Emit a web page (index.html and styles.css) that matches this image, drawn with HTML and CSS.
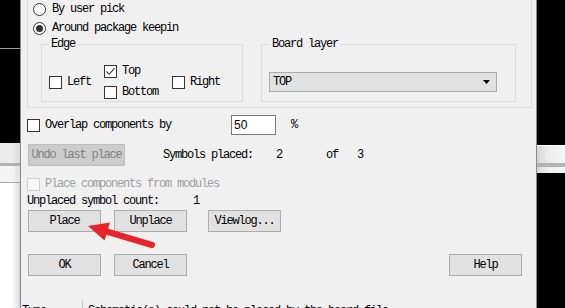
FILE: index.html
```html
<!DOCTYPE html>
<html>
<head>
<meta charset="utf-8">
<link rel="stylesheet" href="styles.css">
</head>
<body>
<div class="screen">
  <div class="bg-left">
    <div class="bl-black bl-top"></div>
    <div class="bl-line"></div>
    <div class="bl-black bl-mid"></div>
    <div class="bl-bar"></div>
    <div class="bl-dark"></div>
    <div class="bl-light"></div>
    <div class="bl-line2"></div>
    <div class="bl-white"></div>
  </div>

  <div class="dialog">
    <div class="outer">
      <div class="radio-row"><span class="radio"></span><span>By user pick</span></div>
      <div class="radio-row"><span class="radio on"></span><span>Around package keepin</span></div>
      <div class="groups">
        <div class="group group-edge">
          <div class="gtitle">Edge</div>
          <div class="edge-body">
            <div class="check col1"><span class="box"></span><span>Left</span></div>
            <div class="col2">
              <div class="check"><span class="box checked"><svg viewBox="0 0 11 11" width="11" height="11"><path d="M1.5 5.5 L4.2 8.3 L9.5 2.2" fill="none" stroke="#333" stroke-width="1.1"/></svg></span><span>Top</span></div>
              <div class="check"><span class="box"></span><span>Bottom</span></div>
            </div>
            <div class="check"><span class="box"></span><span>Right</span></div>
          </div>
        </div>
        <div class="group group-board">
          <div class="gtitle gtitle-board">Board layer</div>
          <div class="select">
            <span>TOP</span>
            <svg class="caret" viewBox="0 0 7 4" width="7" height="4"><polygon points="0,0 7,0 3.5,4" fill="#000"/></svg>
          </div>
        </div>
      </div>
    </div>

    <div class="overlap-row">
      <div class="check ov-label"><span class="box"></span><span>Overlap components by</span></div>
      <div class="input">50</div>
      <span class="pct">%</span>
    </div>

    <div class="undo-row">
      <div class="btn btn-disabled btn-undo">Undo last place</div>
      <span class="sp-label">Symbols placed:</span>
      <span class="sp-num">2</span>
      <span class="sp-of">of</span>
      <span>3</span>
    </div>

    <div class="check disabled modules-row"><span class="box"></span><span>Place components from modules</span></div>

    <div class="unplaced-row"><span class="up-label">Unplaced symbol count:</span><span>1</span></div>

    <div class="btn-row btn-row1">
      <div class="btn">Place</div>
      <div class="btn">Unplace</div>
      <div class="btn btn-viewlog">Viewlog...</div>
    </div>

    <div class="btn-row btn-row2">
      <div class="btn">OK</div>
      <div class="btn">Cancel</div>
      <div class="btn btn-help">Help</div>
    </div>

    <div class="log-row">
      <div class="log-cell log-first">Type</div>
      <div class="log-cell log-second">Schematic(s) could not be placed by the board file.</div>
    </div>

    <svg class="arrow" viewBox="0 0 515 308" width="515" height="308">
      <line x1="131" y1="245" x2="84" y2="231" stroke="#e8232a" stroke-width="6" stroke-linecap="round"/>
      <polygon points="67,226 89,222.6 83.6,240.6" fill="#e8232a"/>
    </svg>
  </div>

  <div class="bg-right">
    <div class="br-black br-top"></div>
    <div class="br-white"></div>
    <div class="br-light"></div>
    <div class="br-gray"></div>
    <div class="br-light2"></div>
    <div class="br-black br-bottom"></div>
  </div>
</div>
</body>
</html>
```

FILE: styles.css
```css
* { box-sizing: border-box; }

html, body {
  margin: 0;
  padding: 0;
}

body {
  width: 565px;
  height: 308px;
  overflow: hidden;
  font-family: "Liberation Mono", "DejaVu Sans Mono", monospace;
  font-size: 12px;
  letter-spacing: -1.2px;
  line-height: 13px;
  color: #000;
}

.screen {
  display: flex;
  width: 565px;
  height: 308px;
  overflow: hidden;
}

/* background window on the left */
.bg-left {
  width: 20px;
  display: flex;
  flex-direction: column;
}
.bl-black { background: #000; }
.bl-top { height: 48px; }
.bl-line { height: 1px; background: #9a9a9a; }
.bl-mid { height: 94px; }
.bl-bar { height: 20px; background: linear-gradient(90deg, #e9e9e9, #ececec 60%, #d8d8d8); }
.bl-dark { height: 3px; background: #b2b2b2; }
.bl-light { height: 16px; background: linear-gradient(90deg, #f4f4f4, #f4f4f4 60%, #dedede); }
.bl-line2 { height: 1px; background: #a6a6a6; }
.bl-white { flex: 1; background: linear-gradient(90deg, #ffffff, #ffffff 55%, #e6e6e6 90%, #cfcfcf); }

/* background window on the right */
.bg-right {
  width: 28px;
  display: flex;
  flex-direction: column;
}
.br-black { background: #000; }
.br-top { height: 145px; }
.br-white { height: 1px; background: #ffffff; }
.br-light { height: 17px; background: linear-gradient(90deg, #d4d4d4, #ececec 40%, #f6f6f6); }
.br-gray { height: 4px; background: #b4b4b4; }
.br-light2 { height: 6px; background: linear-gradient(90deg, #d8d8d8, #efefef 40%, #f6f6f6); }
.br-bottom { flex: 1; }

/* dialog */
.dialog {
  position: relative;
  width: 517px;
  background: #f0f0f0;
  border-left: 1px solid #7d8ba3;
  border-right: 1px solid #7d8ba3;
  padding-left: 6px;
}

.outer {
  width: 505px;
  border: 1px solid #dcdcdc;
  border-top: none;
  padding: 0 0 5px 5px;
}

.radio-row {
  display: flex;
  align-items: center;
  height: 19px;
  gap: 6px;
}

.radio {
  width: 13px;
  height: 13px;
  border: 1px solid #333;
  border-radius: 50%;
  background: #fff;
  display: flex;
  align-items: center;
  justify-content: center;
}
.radio.on::after {
  content: "";
  width: 7px;
  height: 7px;
  border-radius: 50%;
  background: #333;
}

.groups {
  display: flex;
  gap: 18px;
  margin: 6px 0 0 8px;
}

.group {
  border: 1px solid #dcdcdc;
}
.group-edge { width: 202px; padding-bottom: 2px; }
.group-board { width: 255px; }

.gtitle {
  width: max-content;
  margin: -7px 0 0 7px;
  padding: 0 2px;
  height: 12px;
  line-height: 12px;
  background: #f0f0f0;
}
.gtitle-board { margin-left: 8px; }

.edge-body {
  display: flex;
  align-items: center;
  margin-top: 15px;
  padding-left: 7px;
}
.col1 { margin-right: 13px; }
.col2 {
  display: flex;
  flex-direction: column;
  gap: 8px;
  margin-right: 14px;
}

.check {
  display: flex;
  align-items: center;
  gap: 5px;
  height: 13px;
}
.box {
  width: 13px;
  height: 13px;
  border: 1px solid #333;
  background: #fff;
  flex: none;
  display: flex;
  align-items: center;
  justify-content: center;
}
.box svg { display: block; }

.select {
  width: 228px;
  height: 20px;
  margin: 22px 0 0 7px;
  border: 1px solid #adadad;
  background: #e1e1e1;
  display: flex;
  align-items: center;
  justify-content: space-between;
  padding: 0 6px 0 3px;
}
.caret { display: block; }

.overlap-row {
  display: flex;
  align-items: center;
  height: 20px;
  margin-top: 7px;
}
.ov-label { width: 204px; }
.input {
  width: 45px;
  height: 20px;
  border: 1px solid #7a7a7a;
  background: #fff;
  font-family: "Liberation Sans", Arial, sans-serif;
  letter-spacing: 0;
  font-size: 12px;
  line-height: 18px;
  padding-left: 2px;
}
.pct { margin-left: 15px; }

.undo-row {
  display: flex;
  align-items: center;
  height: 22px;
  margin-top: 9px;
}
.btn {
  width: 73px;
  height: 22px;
  border: 1px solid #adadad;
  background: #e1e1e1;
  display: flex;
  align-items: center;
  justify-content: center;
}
.btn-disabled {
  background: #cccccc;
  border-color: #bfbfbf;
  color: #838383;
}
.btn-undo { width: 97px; margin-left: 1px; margin-right: 38px; }
.sp-label { width: 113px; }
.sp-num { width: 50px; }
.sp-of { width: 31px; }

.modules-row { margin-top: 12px; }
.check.disabled { color: #a0a0a0; }
.check.disabled .box { border-color: #cfcfcf; background: #f7f7f7; }

.unplaced-row {
  display: flex;
  height: 13px;
  margin-top: 4px;
}
.up-label { width: 166px; }

.btn-row {
  display: flex;
  margin-left: 1px;
  gap: 13px;
}
.btn-row1 { margin-top: 2px; }
.btn-row2 { margin-top: 22px; }
.btn-viewlog { margin-left: 8px; }
.btn-help { margin-left: 249px; }

.log-row {
  display: flex;
  margin: 24px 0 0 -6px;
  height: 20px;
}
.log-cell {
  padding-top: 5px;
  white-space: nowrap;
  overflow: hidden;
}
.log-first { width: 61px; padding-left: 1px; }
.log-second { flex: 1; border-left: 1px solid #c8c8c8; padding-left: 5px; }

.arrow {
  position: absolute;
  left: 0;
  top: 0;
  pointer-events: none;
}
```
